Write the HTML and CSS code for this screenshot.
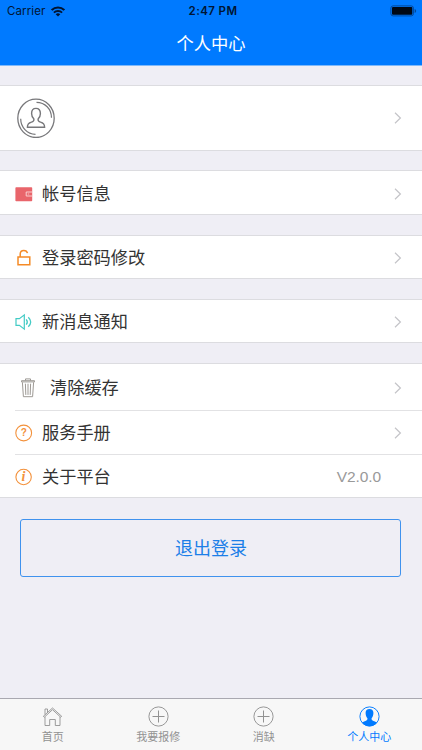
FILE: index.html
```html
<!DOCTYPE html>
<html lang="zh-CN">
<head>
    <meta charset="UTF-8">
    <meta name="viewport" content="width=device-width, initial-scale=1.0">
    <title>个人中心</title>
    <link rel="stylesheet" href="styles.css">
</head>
<body>

    <!-- Shared icons -->
    <svg class="defs" width="0" height="0">
        <symbol id="arrow" viewBox="0 0 8 12">
            <path d="M1 .8 6.4 6 1 11.2" fill="none" stroke="#c4c4c8" stroke-width="1.2"/>
        </symbol>
        <symbol id="plus" viewBox="0 0 21 21">
            <circle cx="10.5" cy="10.5" r="9.6" fill="none" stroke="currentColor" stroke-width=".95"/>
            <path d="M10.5 4.5v12M4.5 10.5h12" stroke="currentColor" stroke-width="1"/>
        </symbol>
    </svg>

    <header class="header">
        <div class="status-bar">
            <div class="carrier">
                <span>Carrier</span>
                <svg width="14" height="11" viewBox="0 0 14 11" fill="none" stroke="#001533">
                    <path d="M.7 4.1a9 9 0 0 1 12.6 0" stroke-width="2.1"/>
                    <path d="M2.9 6.6a5.9 5.9 0 0 1 8.2 0" stroke-width="1.9"/>
                    <path d="M4.7 8.3a3.4 3.4 0 0 1 4.6 0L7 10.6z" fill="#001533" stroke="none"/>
                </svg>
            </div>
            <span class="time">2:47 PM</span>
            <svg class="battery" width="27" height="12" viewBox="0 0 27 12">
                <rect x=".9" y=".9" width="22.5" height="10" rx="2.2" fill="none" stroke="#00489a" stroke-width="1"/>
                <rect x="2" y="2" width="20.3" height="7.8" rx="1" fill="#000814"/>
                <path d="M24.6 4v4q1.6-.6 1.6-2t-1.6-2z" fill="#00489a"/>
            </svg>
        </div>
        <h1 class="title">个人中心</h1>
    </header>

    <main class="content">
        <div class="group profile">
            <div class="row">
                <svg class="avatar" width="38" height="40" viewBox="0 0 38 40" fill="none" stroke="#77777a">
                    <ellipse cx="19" cy="20.3" rx="18.2" ry="19.2" stroke-width="1.3"/>
                    <path d="M19.5 4.3C28 4.3 34.5 11 34.5 19.8M3.7 20.8C3.7 29 10 36.3 18.5 36.3" stroke-width="1.2"/>
                    <path d="M19 10.4c-2.9 0-4.4 2.2-4.4 5.1 0 2.6 1 4.4 2.3 5.6.3 1.8-.6 2.5-2.5 3.1-3.1.9-4 2.2-4 5.1h17.2c0-2.9-.9-4.2-4-5.1-1.9-.6-2.8-1.3-2.5-3.1 1.3-1.2 2.3-3 2.3-5.6 0-2.9-1.5-5.1-4.4-5.1z" stroke-width="1.4"/>
                </svg>
                <svg class="arrow"><use href="#arrow"/></svg>
            </div>
        </div>

        <div class="group account">
            <div class="row">
                <svg class="icon" width="18" height="18" viewBox="0 0 18 18">
                    <rect x=".4" y="2.2" width="16.8" height="14" rx=".8" fill="#e9656b"/>
                    <path d="M17.2 7h-6v4h6" fill="none" stroke="#f9d0d1" stroke-width="1"/>
                    <path d="M12.8 9h1.4" stroke="#f6c0c2"/>
                </svg>
                <span class="label">帐号信息</span>
                <svg class="arrow"><use href="#arrow"/></svg>
            </div>
        </div>

        <div class="group">
            <div class="row">
                <svg class="icon" width="18" height="18" viewBox="0 0 18 18" fill="none" stroke="#f58a26" stroke-width="1.5">
                    <path d="M3 8.1h11.8v7.6H3zM5.2 8V4.9a3.6 3.6 0 0 1 3.6-3.5c2 0 3.3 1.1 3.7 2.8"/>
                </svg>
                <span class="label">登录密码修改</span>
                <svg class="arrow"><use href="#arrow"/></svg>
            </div>
        </div>

        <div class="group">
            <div class="row">
                <svg class="icon" width="18" height="18" viewBox="0 0 18 18" fill="none" stroke="#43cbc5" stroke-width="1.2">
                    <path d="M1 5.7h3.4L9.3 1.9v14.2l-4.9-3.8H1z"/>
                    <path d="M11.2 6.3q2.2 2.7 0 5.4M13.3 4.2q4.8 4.8 0 9.6" stroke-width="1.3"/>
                </svg>
                <span class="label">新消息通知</span>
                <svg class="arrow"><use href="#arrow"/></svg>
            </div>
        </div>

        <div class="group more">
            <div class="row clear">
                <svg class="icon" width="14" height="20" viewBox="0 0 14 20" fill="none" stroke="#9d9994" stroke-width="1">
                    <path d="M.5 3.9V2.7h13v1.2zM4.5 2.5V.9h5v1.6M1.4 4.3l1 14.4h9.2l1-14.4"/>
                    <path d="M4.4 5.7l.4 11.2M7 5.7v11.2M9.6 5.7l-.4 11.2"/>
                </svg>
                <span class="label">清除缓存</span>
                <svg class="arrow"><use href="#arrow"/></svg>
            </div>
            <div class="row manual">
                <svg class="icon" width="18" height="18" viewBox="0 0 18 18">
                    <circle cx="8.7" cy="9" r="7.9" fill="none" stroke="#f3913b" stroke-width="1.1"/>
                    <text class="mark" x="8.8" y="12.4">?</text>
                </svg>
                <span class="label">服务手册</span>
                <svg class="arrow"><use href="#arrow"/></svg>
            </div>
            <div class="row about">
                <svg class="icon" width="18" height="18" viewBox="0 0 18 18">
                    <circle cx="8.6" cy="9" r="7.7" fill="none" stroke="#f3913b" stroke-width="1.1"/>
                    <text class="mark info" x="8.5" y="13.1">i</text>
                </svg>
                <span class="label">关于平台</span>
                <span class="version">V2.0.0</span>
            </div>
        </div>

        <button class="logout">退出登录</button>
    </main>

    <nav class="tab-bar">
        <a class="tab">
            <svg width="21" height="21" viewBox="0 0 21 21" fill="none" stroke="currentColor" stroke-width=".9">
                <path d="M1.3 10.3 10.5 2l9.2 8.3-1 .9-8.2-7.5-8.2 7.5zM3 10.8V19.5h4.7v-6h5.6v6H18v-8.7M3 8.5V3h2.5v3.2"/>
            </svg>
            <span>首页</span>
        </a>
        <a class="tab">
            <svg width="21" height="21"><use href="#plus"/></svg>
            <span>我要报修</span>
        </a>
        <a class="tab">
            <svg width="21" height="21"><use href="#plus"/></svg>
            <span>消缺</span>
        </a>
        <a class="tab active">
            <svg width="21" height="21" viewBox="0 0 21 21">
                <circle cx="10.5" cy="10.5" r="9.6" fill="none" stroke="currentColor" stroke-width=".95"/>
                <path d="M10.5 3.1c-2.6 0-4 1.4-3.9 4 0 2.2.7 4 1.8 5.2.2 1.9-.8 2.3-2.5 2.9-1.3.4-2.3.8-2.9 1.6a9.8 9.8 0 0 0 15 0c-.6-.8-1.6-1.2-2.9-1.6-1.7-.6-2.7-1-2.5-2.9 1.1-1.2 1.8-3 1.8-5.2.1-2.6-1.3-4-3.9-4z" fill="currentColor"/>
            </svg>
            <span>个人中心</span>
        </a>
    </nav>

</body>
</html>
```
FILE: styles.css
```css
* {
    box-sizing: border-box;
}

body {
    margin: 0;
    height: 750px;
    display: flex;
    flex-direction: column;
    overflow: hidden;
    background-color: #efeef5;
    font-family: "Liberation Sans", "Noto Sans CJK SC", sans-serif;
    color: #333;
}

svg {
    display: block;
    flex: none;
}

.defs {
    position: absolute;
}

/* Header */
.header {
    height: 66px;
    background-color: #007aff;
    border-bottom: 1px solid #7fb9fa;
}

.status-bar {
    height: 22px;
    padding: 0 5px 0 7px;
    display: grid;
    grid-template-columns: 1fr auto 1fr;
    align-items: center;
    font-family: Inter, sans-serif;
    font-size: 11.5px;
    color: #001533;
}

.carrier {
    display: flex;
    align-items: center;
    gap: 6px;
    letter-spacing: 0.1px;
}

.time {
    padding-left: 2px;
    font-weight: 600;
    letter-spacing: 0.4px;
}

.battery {
    justify-self: end;
}

.title {
    margin: 0;
    font-size: 17.3px;
    font-weight: 400;
    line-height: 44px;
    text-align: center;
    color: #fff;
}

/* List */
.content {
    flex: 1;
}

.group {
    margin-top: 20px;
    background-color: #fff;
    border-top: 1px solid #dcdce0;
    border-bottom: 1px solid #dcdce0;
}

.row {
    height: 42px;
    padding: 2px 20px 0 15px;
    display: flex;
    align-items: center;
}

.profile {
    margin-top: 19px;
}

.profile .row {
    height: 64px;
    padding-top: 0;
    padding-left: 17px;
}

.account {
    margin-top: 19px;
}

.account .row {
    height: 43px;
    padding-top: 3px;
}

.label {
    margin-left: 9px;
    font-size: 17.2px;
    line-height: 24px;
}

.arrow {
    width: 8px;
    height: 12px;
    margin-left: auto;
}

.more .row {
    height: 44px;
    margin-left: 15px;
    padding-left: 0;
    border-top: 1px solid #e2e2e4;
}

.more .clear {
    height: 46px;
    padding-left: 6px;
    border-top: none;
}

.clear .label {
    margin-left: 15px;
}

.more .manual {
    padding-top: 1px;
}

.more .about {
    height: 43px;
    padding-right: 41px;
}

.mark {
    fill: #f3913b;
    font-family: "Liberation Sans", sans-serif;
    font-size: 10px;
    font-weight: 700;
    text-anchor: middle;
}

.info {
    font-family: "Liberation Serif", serif;
    font-size: 14px;
    font-style: italic;
}

.version {
    margin-left: auto;
    font-size: 15.5px;
    letter-spacing: -0.1px;
    color: #999;
}

.logout {
    display: block;
    width: 381px;
    height: 58px;
    margin: 21px 0 0 20.4px;
    padding: 0 0 2px;
    background: none;
    border: 1px solid #3f92ee;
    border-radius: 3px;
    font-family: inherit;
    font-size: 18px;
    color: #1c7fe8;
}

/* Bottom tabs */
.tab-bar {
    height: 52px;
    display: flex;
    background-color: #f7f7f7;
    border-top: 1px solid #a9a8b0;
}

.tab {
    flex: 1;
    display: flex;
    flex-direction: column;
    align-items: center;
    padding-top: 7px;
    font-size: 11px;
    line-height: 20px;
    color: #929292;
}

.active {
    color: #007aff;
}
```
